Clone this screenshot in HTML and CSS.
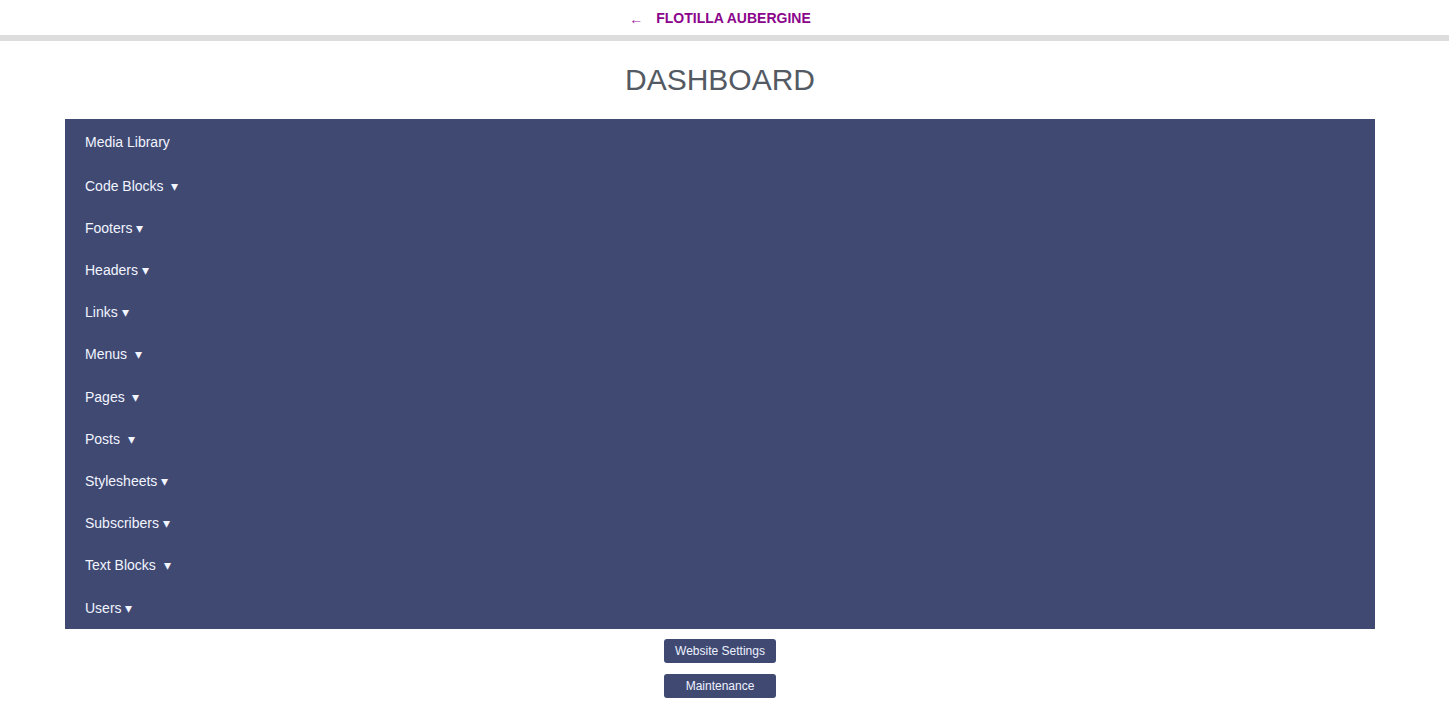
FILE: index.html
```html
<!DOCTYPE html>
<html lang="en">
<head>
<meta charset="utf-8">
<title>Dashboard</title>
<link rel="stylesheet" href="styles.css">
</head>
<body>
<div class="page">
  <header class="topbar">
    <a class="back" href="#"><span class="arrow">&larr;</span><span class="site">FLOTILLA AUBERGINE</span></a>
  </header>
  <div class="rule"></div>
  <h1 class="title">DASHBOARD</h1>
  <nav class="panel">
    <ul class="menu">
      <li class="item first">Media Library</li>
      <li class="item">Code Blocks&nbsp; ▾</li>
      <li class="item">Footers ▾</li>
      <li class="item">Headers ▾</li>
      <li class="item">Links ▾</li>
      <li class="item">Menus&nbsp; ▾</li>
      <li class="item">Pages&nbsp; ▾</li>
      <li class="item">Posts&nbsp; ▾</li>
      <li class="item">Stylesheets ▾</li>
      <li class="item">Subscribers ▾</li>
      <li class="item">Text Blocks&nbsp; ▾</li>
      <li class="item">Users ▾</li>
    </ul>
  </nav>
  <div class="actions">
    <button class="btn">Website Settings</button>
    <button class="btn">Maintenance</button>
  </div>
</div>
</body>
</html>
```
FILE: styles.css
```css
html, body {
  margin: 0;
  padding: 0;
  background: #ffffff;
  font-family: "Liberation Sans", Arial, sans-serif;
}

.page {
  width: 1440px;
}

.topbar {
  height: 35px;
  display: flex;
  align-items: center;
  justify-content: center;
}

.back {
  display: flex;
  align-items: center;
  text-decoration: none;
  color: #8b058b;
  line-height: 16px;
}

.arrow {
  font-size: 14px;
  color: #a020a0;
  margin-right: 13px;
  margin-top: 3px;
}

.site {
  font-size: 14px;
  font-weight: bold;
}

.rule {
  height: 6px;
  background: #dddddd;
  width: 1449px;
}

.title {
  margin: 21px 0 22px;
  font-size: 30px;
  line-height: 35px;
  font-weight: normal;
  color: #545a63;
  text-align: center;
}

.panel {
  margin: 0 auto;
  width: 1310px;
  background: #3f4972;
}

.menu {
  list-style: none;
  margin: 0;
  padding: 0;
}

.item {
  height: 42.2px;
  display: flex;
  align-items: center;
  padding-left: 20px;
  font-size: 14px;
  line-height: 21px;
  color: #f2f4ff;
  white-space: pre;
}

.item.first {
  height: 46px;
}

.item:last-child {
  padding-top: 2px;
  height: 40.2px;
}

.actions {
  display: flex;
  flex-direction: column;
  align-items: center;
  gap: 11px;
  padding-top: 10px;
}

.btn {
  width: 112px;
  height: 24px;
  border: none;
  border-radius: 3px;
  background: #3f4972;
  color: #eef1ff;
  font-family: "Liberation Sans", Arial, sans-serif;
  font-size: 12px;
  padding: 0;
  cursor: pointer;
}
```
